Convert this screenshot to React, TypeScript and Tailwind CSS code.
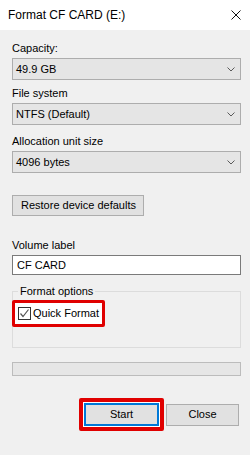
export default function App() {
  function Combo({ value }: { value: string }) {
    return (
      <div className="mt-[2px] h-[22px] flex items-center justify-between border border-[#adadad] bg-[#e5e5e5] pl-[3px] pr-[5px]">
        <span>{value}</span>
        <svg width="8" height="5" viewBox="0 0 8 5" className="mt-[1px]">
          <path d="M0.5 0.5 L4 4 L7.5 0.5" fill="none" stroke="#5a5a5a" strokeWidth="1" />
        </svg>
      </div>
    );
  }

  return (
    <div
      className="w-[250px] h-[455px] flex flex-col text-[11px] leading-[15px] text-black"
      style={{ fontFamily: '"Liberation Sans", Arial, sans-serif' }}
    >
      <div className="h-[30px] shrink-0 bg-white flex items-center justify-between pl-[8px] pr-[9px] text-[12px]">
        <span>Format CF CARD (E:)</span>
        <svg width="10" height="10" viewBox="0 0 10 10">
          <path d="M0.5 0.5 L9.5 9.5 M9.5 0.5 L0.5 9.5" stroke="#111" strokeWidth="1" />
        </svg>
      </div>

      <div className="flex-1 bg-[#f0f0f0] pl-3 pr-[9px] pt-[11px] flex flex-col">
        <div>Capacity:</div>
        <Combo value="49.9 GB" />

        <div className="mt-[6px]">File system</div>
        <Combo value="NTFS (Default)" />

        <div className="mt-[9px]">Allocation unit size</div>
        <Combo value="4096 bytes" />

        <button className="mt-[22px] w-[132px] h-[21px] border border-[#adadad] bg-[#e1e1e1] text-left pl-[8px]">
          Restore device defaults
        </button>

        <div className="mt-[22px]">Volume label</div>
        <div className="mt-[2px] h-[20px] flex items-center border border-[#7a7a7a] bg-white pl-[4px]">
          CF CARD
        </div>

        <fieldset className="mt-[9px] border border-[#dcdcdc] pb-[20px]">
          <legend className="ml-[5px] px-[2px]">Format options</legend>
          <div className="-ml-[1px] mt-[1px] w-[93px] h-[27px] border-[3px] border-[#e00000] rounded-[2px] bg-white flex items-center pl-[3px] whitespace-nowrap">
            <div className="shrink-0 w-[13px] h-[13px] border border-[#333] bg-white flex items-center justify-center">
              <svg width="11" height="11" viewBox="0 0 11 11">
                <path d="M1.5 5.5 L4 8.5 L9.5 1.5" fill="none" stroke="#555" strokeWidth="1.2" />
              </svg>
            </div>
            <span className="ml-[2px]">Quick Format</span>
          </div>
        </fieldset>

        <div className="mt-[14px] h-[14px] border border-[#bcbcbc] bg-[#e6e6e6]" />

        <div className="mt-[22px] flex items-center justify-end gap-[2px] mr-[2px]">
          <div className="w-[85px] h-[33px] border-[4px] border-[#e00000] rounded-[2px] bg-white p-[1px]">
            <button className="w-full h-full border-2 border-[#0078d7] bg-[#e1e1e1]">Start</button>
          </div>
          <button className="w-[73px] h-[22px] border border-[#adadad] bg-[#e1e1e1]">Close</button>
        </div>
      </div>
    </div>
  );
}
